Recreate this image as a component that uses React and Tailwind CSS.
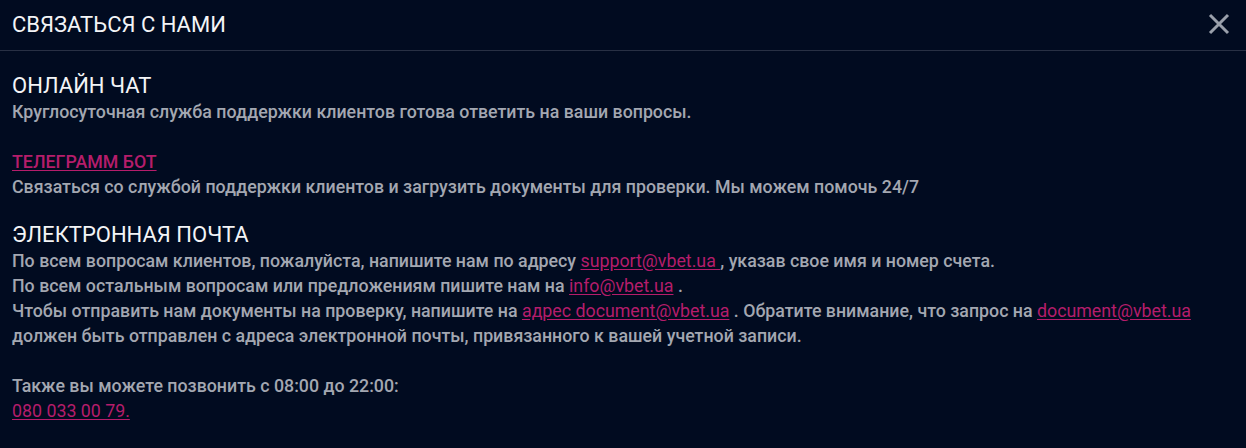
function Link({ children }) {
  return <a href="#" className="text-[#b51d6b] underline underline-offset-2 font-normal">{children}</a>
}

export default function App() {
  return (
    <div className="min-h-screen w-full bg-[#010b20] font-['Roboto',sans-serif]">
      {/* Header */}
      <div className="h-[51px] flex items-center justify-between pl-3 pr-[16px] border-b border-[#283044]">
        <h1 className="text-[22px] text-[#f3f4f6] leading-none">СВЯЗАТЬСЯ С НАМИ</h1>
        <svg width="22" height="22" viewBox="0 0 22 22" className="mb-[3px]">
          <path d="M2 2 L20 20 M20 2 L2 20" stroke="#9aa0ab" strokeWidth="3" strokeLinecap="butt" />
        </svg>
      </div>

      <div className="px-3 pt-[21px] text-[17.8px] leading-[25px] font-medium text-[#a3a7b1]">
        <section>
          <h2 className="text-[22px] font-normal text-[#f3f4f6] leading-[27px]">ОНЛАЙН ЧАТ</h2>
          <p>Круглосуточная служба поддержки клиентов готова ответить на ваши вопросы.</p>
        </section>

        <section className="mt-[25px]">
          <a href="#" className="text-[#b51d6b] underline underline-offset-2">ТЕЛЕГРАММ БОТ</a>
          <p>Связаться со службой поддержки клиентов и загрузить документы для проверки. Мы можем помочь 24/7</p>
        </section>

        <section className="mt-[23px]">
          <h2 className="text-[22px] font-normal text-[#f3f4f6] leading-[26px]">ЭЛЕКТРОННАЯ ПОЧТА</h2>
          <p>
            По всем вопросам клиентов, пожалуйста, напишите нам по адресу <Link>support@vbet.ua </Link>, указав свое имя и номер счета.
            <br />
            По всем остальным вопросам или предложениям пишите нам на <Link>info@vbet.ua</Link> .
            <br />
            Чтобы отправить нам документы на проверку, напишите на <Link>адрес document@vbet.ua</Link> . Обратите внимание, что запрос на <Link>document@vbet.ua</Link>
            <br />
            должен быть отправлен с адреса электронной почты, привязанного к вашей учетной записи.
          </p>
          <p className="mt-[25px]">
            Также вы можете позвонить с 08:00 до 22:00:
            <br />
            <Link>080 033 00 79.</Link>
          </p>
        </section>
      </div>
    </div>
  )
}
